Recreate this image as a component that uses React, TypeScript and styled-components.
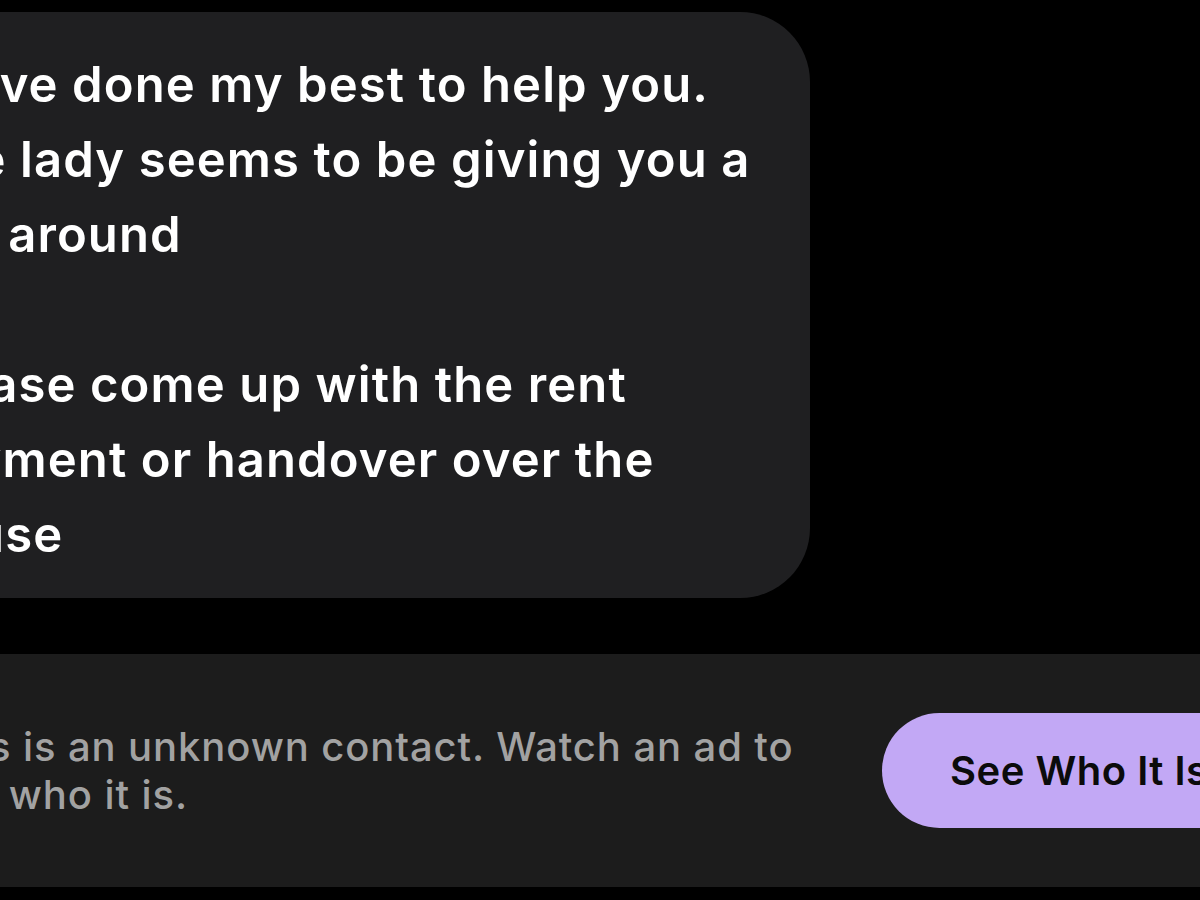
import React from "react";
import styled, { createGlobalStyle } from "styled-components";

const Global = createGlobalStyle`
  html, body {
    margin: 0;
    padding: 0;
    background: #000;
    overflow: hidden;
  }
  body {
    font-family: Inter, "Noto Sans", "Liberation Sans", sans-serif;
    -webkit-font-smoothing: antialiased;
  }
`;

const Screen = styled.div`
  width: 1200px;
  height: 900px;
  background: #000;
  overflow: hidden;
  display: flex;
  flex-direction: column;
  padding-top: 12px;
  box-sizing: border-box;
`;

const Bubble = styled.div`
  margin-left: -122px;
  width: 932px;
  box-sizing: border-box;
  background: #1f1f21;
  border-radius: 70px;
  padding: 35px 0 26px 34px;
  color: #fff;
  font-size: 49px;
  font-weight: 600;
  line-height: 75px;
  letter-spacing: 1.1px;
`;

const Line = styled.div`
  white-space: nowrap;
  min-height: 75px;
`;

const Bar = styled.div`
  margin-top: 56px;
  height: 233px;
  background: #1c1c1c;
  display: flex;
  align-items: center;
  margin-left: -74px;
  width: 1400px;
`;

const Notice = styled.div`
  flex: 0 0 auto;
  width: 928px;
  color: #a2a2a2;
  font-size: 40px;
  font-weight: 500;
  line-height: 48px;
  letter-spacing: 0.9px;
  white-space: nowrap;
`;

const RevealButton = styled.button`
  flex: 0 0 auto;
  margin-left: 28px;
  height: 115px;
  border: none;
  border-radius: 58px;
  background: #c2a8f5;
  color: #0b0b0b;
  font-family: Inter, "Noto Sans", "Liberation Sans", sans-serif;
  font-size: 40px;
  font-weight: 600;
  letter-spacing: 0.5px;
  padding: 0 68px;
  white-space: nowrap;
  cursor: pointer;
`;

const lines = [
  "I have done my best to help you.",
  "The lady seems to be giving you a",
  "run around",
  "",
  "Please come up with the rent",
  "payment or handover over the",
  "house",
];

export default function App() {
  return (
    <>
      <Global />
      <Screen>
        <Bubble>
          {lines.map((l, i) => (
            <Line key={i}>{l}</Line>
          ))}
        </Bubble>
        <Bar>
          <Notice>
            This is an unknown contact. Watch an ad to
            <br />
            see who it is.
          </Notice>
          <RevealButton>See Who It Is</RevealButton>
        </Bar>
      </Screen>
    </>
  );
}
